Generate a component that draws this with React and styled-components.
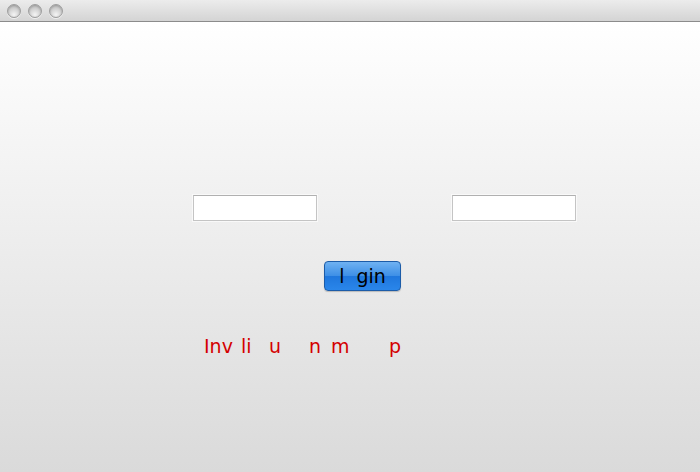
import React from "react";
import styled, { createGlobalStyle } from "styled-components";

const GlobalStyle = createGlobalStyle`
  html, body {
    margin: 0;
    padding: 0;
    width: 700px;
    height: 472px;
    overflow: hidden;
    font-family: "DejaVu Sans", "Liberation Sans", sans-serif;
  }
`;

const Window = styled.div`
  width: 700px;
  height: 472px;
  display: flex;
  flex-direction: column;
`;

const TitleBar = styled.div`
  height: 21px;
  flex: none;
  display: flex;
  align-items: center;
  gap: 7px;
  padding-left: 7px;
  background: linear-gradient(#ececec, #d4d4d4);
  border-bottom: 1px solid #8c8c8c;
`;

const Light = styled.span`
  width: 14px;
  height: 14px;
  border-radius: 50%;
  box-sizing: border-box;
  border: 1px solid #9e9e9e;
  background: radial-gradient(circle at 50% 80%, #f4f4f4 0%, #d2d2d2 50%, #b4b4b4 100%);
  box-shadow: inset 0 1px 2px rgba(0, 0, 0, 0.2), 0 1px 0 rgba(255, 255, 255, 0.6);
`;

const Content = styled.div`
  flex: 1;
  display: flex;
  flex-direction: column;
  background: linear-gradient(#ffffff 0%, #f2f2f2 35%, #dadada 100%);
`;

const FieldRow = styled.div`
  display: flex;
  gap: 135px;
  padding: 173px 0 0 193px;
`;

const Field = styled.input`
  width: 124px;
  height: 26px;
  box-sizing: border-box;
  margin: 0;
  border: 1px solid #c4c4c4;
  border-top-color: #b0b0b0;
  background: #fff;
  box-shadow: 0 0 0 1px rgba(255, 255, 255, 0.6);
  outline: none;
`;

const ButtonRow = styled.div`
  display: flex;
  padding: 40px 0 0 324px;
`;

const LoginButton = styled.button`
  width: 77px;
  height: 30px;
  box-sizing: border-box;
  margin: 0;
  padding: 0 0 1px 0;
  border: 1px solid #1c5ca8;
  border-radius: 4px;
  background: linear-gradient(#6fb2f2 0%, #3d8fe6 50%, #1f77dd 51%, #2a86ea 100%);
  color: #000;
  font-family: "DejaVu Sans", "Liberation Sans", sans-serif;
  font-size: 19px;
  white-space: pre;
  box-shadow: 0 1px 1px rgba(0, 0, 0, 0.2);
`;

const ErrorLine = styled.div`
  display: flex;
  padding: 44px 0 0 204px;
  color: #d40000;
  font-size: 19px;
  line-height: 22px;
`;

const Piece = styled.span`
  display: inline-block;
  width: ${(p) => p.$w}px;
`;

const pieces = [
  ["Inv", 37],
  ["li", 28],
  ["u", 40],
  ["n", 22],
  ["m", 58],
  ["p", 20],
];

export default function App() {
  return (
    <>
      <GlobalStyle />
      <Window>
        <TitleBar>
          <Light />
          <Light />
          <Light />
        </TitleBar>
        <Content>
          <FieldRow>
            <Field type="text" />
            <Field type="password" />
          </FieldRow>
          <ButtonRow>
            <LoginButton>{"l  gin"}</LoginButton>
          </ButtonRow>
          <ErrorLine>
            {pieces.map(([t, w]) => (
              <Piece key={t} $w={w}>
                {t}
              </Piece>
            ))}
          </ErrorLine>
        </Content>
      </Window>
    </>
  );
}
